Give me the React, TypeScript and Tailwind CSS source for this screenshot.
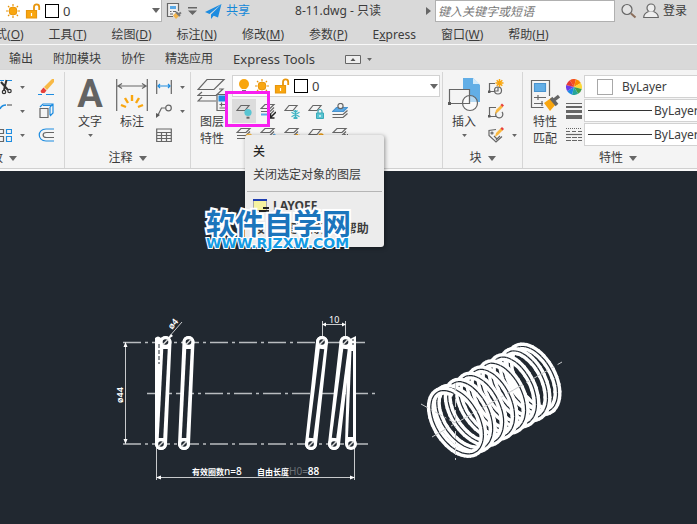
import type { ReactNode } from "react";

const MENUS: [string, string][] = [
  ["格式", "O"],
  ["工具", "T"],
  ["绘图", "D"],
  ["标注", "N"],
  ["修改", "M"],
  ["参数", "P"],
  ["Express", ""],
  ["窗口", "W"],
  ["帮助", "H"],
];

const TABS = ["输出", "附加模块", "协作", "精选应用", "Express Tools"];

/* ── Small shared glyphs ───────────────────────────────────────────────── */

function Caret({ big = false }: { big?: boolean }) {
  return (
    <svg width={big ? 8 : 5} height={big ? 5 : 3} viewBox="0 0 8 5" className="shrink-0" fill="#666">
      <path d="M0 0h8L4 5z" />
    </svg>
  );
}

function Icon({ children, size = 16, w }: { children: ReactNode; size?: number; w?: number }) {
  return (
    <svg
      width={w ?? size}
      height={size}
      viewBox={`0 0 ${w ?? size} ${size}`}
      fill="none"
      stroke="#666"
      strokeWidth="1.2"
      className="block shrink-0"
    >
      {children}
    </svg>
  );
}

function Sun() {
  return (
    <Icon>
      <circle cx="8" cy="8" r="4" fill="#f9a60f" stroke="#e8960c" strokeWidth="1" />
      <path d="M8 1v2M8 13v2M1 8h2M13 8h2M3 3l1.4 1.4M11.6 11.6L13 13M13 3l-1.4 1.4M4.4 11.6L3 13" stroke="#e8960c" />
    </Icon>
  );
}

function Unlock() {
  return (
    <Icon>
      <path d="M9 7V4a2.6 2.6 0 0 1 5.2 0v3" stroke="#e8960c" strokeWidth="1.8" />
      <path d="M1.5 7.5h10v7.5h-10z" fill="#f9a60f" stroke="#e8960c" />
      <path d="M6.5 10v3" stroke="#fff" />
    </Icon>
  );
}

function Bulb() {
  return (
    <Icon w={12}>
      <circle cx="6" cy="6" r="5" fill="#f9a60f" stroke="none" />
      <path d="M3.5 9h5v2h-5z" fill="#f9a60f" stroke="none" />
      <path d="M4 12.5h4M4.5 14.5h3" stroke="#777" />
    </Icon>
  );
}

function Swatch() {
  return <span className="h-3.5 w-3.5 shrink-0 border border-black bg-white" />;
}

/* ── Title bar, menus and tabs ─────────────────────────────────────────── */

function TitleBar() {
  return (
    <header className="flex h-[22px] items-center">
      <label className="flex h-[22px] w-[162px] shrink-0 items-center border-b border-r border-[#b4b4b4] bg-white pl-[5px] pr-px">
        <Sun />
        <span className="w-1" />
        <Unlock />
        <span className="w-1" />
        <Swatch />
        <select aria-label="图层" className="ml-1 min-w-0 flex-1 appearance-none bg-transparent text-[13px] outline-none">
          <option>0</option>
        </select>
        <Caret big />
      </label>
      <button aria-label="图纸集" className="ml-1">
        <Icon>
          <path d="M12.5 8V.5h-11v13H7" fill="#eee" />
          <path d="M4 3h6v3H4z" fill="#5aa9e6" stroke="none" />
          <path d="M4 8.500h1.500M7 8.500h3M4 11h3" />
          <path d="M7 12.500l3-3 3 3.500-3 3z" fill="#f2b44c" stroke="none" />
          <path d="M10 9l4 4M12.500 11.500L15 9.500" strokeWidth="2" stroke="#777" />
        </Icon>
      </button>
      <button aria-label="自定义快速访问工具栏" className="ml-1.5">
        <svg width="9" height="8" fill="#666">
          <path d="M0 0h9v1.500H0zM0 3.500h9L4.500 8z" />
        </svg>
      </button>
      <button className="ml-2 flex items-center gap-1 text-[#1488d8]">
        <svg width="17" height="15" viewBox="0 0 17 15" fill="#1d8ce0">
          <path d="M16.500 0L0 8l4.500 2zM16.500 0L6 10.500V15l2.700-3.200L13 13.500z" />
        </svg>
        共享
      </button>
      <h1 className="flex-1 whitespace-nowrap text-center">8-11.dwg - 只读</h1>
      <svg width="5" height="8" fill="#666" className="shrink-0">
        <path d="M0 0v8l5-4z" />
      </svg>
      <input
        aria-label="搜索"
        placeholder="键入关键字或短语"
        className="ml-1 h-[22px] w-[180px] shrink-0 border border-[#b0b0b0] bg-white px-0.5 italic outline-none placeholder:text-[#777]"
      />
      <button aria-label="查找" className="ml-1.5">
        <Icon>
          <circle cx="6" cy="6.500" r="5" fill="#e4e4e4" />
          <path d="M10 10.500l4.500 4" stroke="#8b6f5c" strokeWidth="2" />
        </Icon>
      </button>
      <button className="ml-1.5 mr-2.5 flex items-center gap-1 whitespace-nowrap">
        <Icon>
          <circle cx="8" cy="5" r="4" fill="#eee" />
          <path d="M5.500 8.500C3 9.500.7 10.500.7 14.500h14.600c0-4-2.300-5-4.800-6" fill="#eee" />
        </Icon>
        登录
      </button>
    </header>
  );
}

function MenuBar() {
  return (
    <nav className="-ml-[17px] flex h-[23px] items-center gap-[25px] whitespace-nowrap border-b border-[#f8f8f8] pt-1">
      {MENUS.map(([name, key]) => (
        <button key={name}>
          {key ? (
            <>
              {name}(<u>{key}</u>)
            </>
          ) : (
            <>
              E<u>x</u>press
            </>
          )}
        </button>
      ))}
    </nav>
  );
}

function TabBar() {
  return (
    <nav className="flex h-6 items-center gap-5 whitespace-nowrap pl-[9px] pt-1">
      {TABS.map((t) => (
        <button key={t} className={t === "Express Tools" ? "text-[13px]" : ""}>
          {t}
        </button>
      ))}
      <button aria-label="最小化面板" className="ml-2.5 flex items-center gap-1.5">
        <svg width="16" height="9" fill="none" stroke="#666">
          <path d="M.5.5h15v8H.5z" fill="#eee" />
          <path d="M5.500 6h5L8 3z" fill="#555" stroke="none" />
        </svg>
        <Caret />
      </button>
    </nav>
  );
}

/* ── Ribbon ────────────────────────────────────────────────────────────── */

function Panel({ title, className, titleClass = "justify-center", children }: {
  title: string;
  className: string;
  titleClass?: string;
  children: ReactNode;
}) {
  return (
    <section className={`relative flex flex-col border-r border-[#d6d6d6] pt-[3px] ${className}`}>
      <div className="flex h-[73px] items-start">{children}</div>
      <button className={`flex h-5 items-center gap-1.5 whitespace-nowrap ${titleClass}`}>
        {title}
        <Caret big />
      </button>
    </section>
  );
}

function Tool({ label, icon, caret = false, className = "" }: {
  label: string;
  icon: ReactNode;
  caret?: boolean;
  className?: string;
}) {
  return (
    <button className={`flex shrink-0 flex-col items-center pt-[3px] leading-[17px] ${className}`}>
      <span className="mb-px flex h-[34px] items-end">{icon}</span>
      {label.split(" ").map((l) => (
        <span key={l}>{l}</span>
      ))}
      {caret && (
        <span className="mt-1">
          <Caret />
        </span>
      )}
    </button>
  );
}

function ModifyPanel() {
  const rows = [
    {
      name: "修剪",
      alt: "删除",
      a: (
        <>
          <path d="M0 1.500h4M6 1.500h6" stroke="#1d8ce0" />
          <path d="M1 3l7 8M6.500 1L4 11" stroke="#333" strokeWidth="2" />
          <circle cx="4" cy="13" r="1.700" stroke="#333" />
          <circle cx="9.500" cy="12" r="1.700" stroke="#333" />
        </>
      ),
      b: (
        <>
          <path d="M6 8l8-8h2v3l-7 8z" fill="#f8b945" stroke="none" />
          <path d="M5.500 8.500l3 3-2 2.500h-3l-1-2z" fill="#e8403a" stroke="none" />
          <path d="M0 15.500h4M8 15.500h8" stroke="#1d8ce0" />
        </>
      ),
    },
    {
      name: "圆角",
      alt: "分解",
      a: (
        <>
          <path d="M0 6c1-2.500 3-4 6-4" stroke="#1d8ce0" strokeWidth="1.500" />
          <path d="M7 2h5" />
        </>
      ),
      b: (
        <>
          <path d="M2 5.500h8v9H2z" />
          <path d="M2 4l3-3h10v9l-3 3M5 2.500h8M12 4l3-3M12 4v8" stroke="#1d8ce0" />
        </>
      ),
    },
    {
      name: "阵列",
      alt: "偏移",
      a: (
        <>
          <path d="M-1 2.500h4.500v4H-1zM-1 9.500h4.500v5H-1z" stroke="#666" />
          <path d="M6.500 2.500h5v4h-5zM6.500 9.500h5v5h-5z" stroke="#1d8ce0" />
        </>
      ),
      b: (
        <>
          <path d="M16 2H8c-9 0-9 12 0 12h8" stroke="#1d8ce0" />
          <path d="M16 5.500H8.500c-4.500 0-4.500 5 0 5H16" />
        </>
      ),
    },
  ];
  return (
    <Panel title="修改" className="w-[65px] shrink-0" titleClass="-ml-[21px] justify-start">
      <div className="flex flex-col">
        {rows.map((r) => (
          <div key={r.name} className="flex h-6 items-center">
            <button aria-label={r.name} className="flex items-center gap-2">
              <Icon w={12}>{r.a}</Icon>
              <Caret />
            </button>
            <button aria-label={r.alt} className="ml-[13px]">
              <Icon>{r.b}</Icon>
            </button>
          </div>
        ))}
      </div>
    </Panel>
  );
}

function AnnotatePanel() {
  return (
    <Panel title="注释" className="w-[126px] shrink-0">
      <Tool
        label="文字"
        caret
        className="ml-2.5 w-[30px]"
        icon={<span className="font-['Roboto'] text-[38px] font-bold leading-[36px] text-[#636363]">A</span>}
      />
      <Tool
        label="标注"
        className="ml-[11px] w-8"
        icon={
          <Icon size={34} w={32}>
            <path d="M.7 1v32M31.300 1v32M2 8h28M6 5.500L2 8l4 2.500M26 5.500L30 8l-4 2.500" />
            <path d="M16 17v6M9 20l3 5M23 20l-3 5M5 27l5 2M27 27l-5 2" stroke="#f9a60f" strokeWidth="2.400" />
          </Icon>
        }
      />
      <div className="ml-2 flex flex-col">
        <button aria-label="线性" className="flex h-6 items-center gap-2">
          <Icon>
            <path d="M.7 1v14M15.300 1v14" />
            <path d="M2 7h12M4 5L2 7l2 2M12 5l2 2-2 2" stroke="#1d8ce0" />
          </Icon>
          <Caret />
        </button>
        <button aria-label="引线" className="flex h-6 items-center gap-2">
          <Icon>
            <circle cx="12.500" cy="5" r="2.800" />
            <path d="M9.500 5H5.500L1.500 13" />
            <path d="M0 15v-5l4 2z" fill="#5a5a5a" stroke="none" />
          </Icon>
          <Caret />
        </button>
        <button aria-label="表格" className="flex h-6 items-center">
          <Icon>
            <path d="M.7 2h14.600v12.500H.7zM.7 5.500h14.600M.7 8.500h14.600M.7 11.500h14.600M5.500 5.500v9M10.500 5.500v9" />
          </Icon>
        </button>
      </div>
    </Panel>
  );
}

/* Layer command icons: one sheet or a stack of them, plus a badge */
function Sheet({ stack = false, badge }: { stack?: boolean; badge: ReactNode }) {
  return (
    <Icon>
      {stack ? (
        <path d="M5 1.500h9L10 5.500H1zM1 8.500h9l4-4M1 11.500h9l4-4" />
      ) : (
        <path d="M5 2.500h8L9 7.500H1z" />
      )}
      {badge}
    </Icon>
  );
}

const LAYER_TOOLS = [
  {
    name: "关",
    icon: (
      <Sheet
        badge={
          <>
            <circle cx="12" cy="9.500" r="3.600" fill="#59c5d2" stroke="none" />
            <path d="M10.500 14.700h3" stroke="#666" strokeWidth="2" />
          </>
        }
      />
    ),
  },
  {
    name: "置为当前",
    icon: (
      <Sheet
        stack
        badge={
          <>
            <path d="M1 11.500h9" stroke="#5aa9e6" strokeWidth="2" />
            <path d="M16 9l-5 5M10.500 10.500V15h4" stroke="#222" strokeWidth="1.500" />
          </>
        }
      />
    ),
  },
  {
    name: "冻结",
    icon: (
      <Sheet
        badge={<path d="M11.500 7v9M7.500 9.200l8 4.600M7.500 13.800l8-4.600M9.500 7.500l2 2 2-2M9.500 15.500l2-2 2 2" stroke="#3fb4c4" />}
      />
    ),
  },
  {
    name: "锁定",
    icon: (
      <Sheet
        badge={
          <>
            <path d="M10 10V8.500a2 2 0 0 1 4 0V10" stroke="#3aa9b8" />
            <path d="M8.500 10h7v5.500h-7z" fill="#59c5d2" stroke="#3aa9b8" strokeWidth="1" />
            <path d="M12 12v2" stroke="#fff" />
          </>
        }
      />
    ),
  },
  {
    name: "匹配图层",
    icon: (
      <Icon>
        <path d="M4.500 4.500h11l-4 4H.5z" fill="#5aa9e6" stroke="#4a94cf" />
        <circle cx="8.500" cy="3" r="2.600" fill="#f4f4f4" />
        <path d="M.5 11.500h10.500l4.500-4M.5 14.500h10.500l4.500-4" />
      </Icon>
    ),
  },
  { name: "打开所有图层", icon: <Sheet stack badge={<circle cx="13" cy="10" r="3.400" fill="#f9b840" stroke="none" />} /> },
  { name: "隔离", icon: <Sheet stack badge={<path d="M11 12l4-5" stroke="#5aa9e6" strokeWidth="2" />} /> },
  { name: "解冻", icon: <Sheet stack badge={<path d="M13 7v2M10 8l1 2M16 8l-1 2" stroke="#f9a60f" strokeWidth="2" />} /> },
  { name: "解锁", icon: <Sheet badge={<circle cx="13" cy="9" r="2" stroke="#e8960c" strokeWidth="1.500" />} /> },
  { name: "更改图层", icon: <Sheet stack badge={<path d="M12 8h1M15 8h1" strokeWidth="2" />} /> },
];

function LayerTip() {
  return (
    <div
      role="tooltip"
      className="absolute left-[54px] top-[63px] z-10 h-[112px] w-[139px] rounded-[3px] bg-[#ececec] px-2 pt-2 shadow-[1px_1px_4px_rgba(0,0,0,0.4)]"
    >
      <p className="h-[19px] font-medium leading-[18px] text-[#222]">关</p>
      <p className="mt-1 whitespace-nowrap leading-[18px]">关闭选定对象的图层</p>
      <hr className="-mx-1.5 mt-[7px] border-[#b5b5b5]" />
      <p className="mt-1 flex h-5 items-center gap-1 font-bold">
        <svg width="16" height="15" viewBox="0 0 16 15">
          <path d="M.5.5h13v11H.5z" fill="#f6f3a0" stroke="#aaa" />
          <path d="M0 0h14v2H0z" fill="#1d3cb0" />
          <path d="M6 12h10M10 9h6" stroke="#222" strokeWidth="2" />
        </svg>
        LAYOFF
      </p>
      <p className="mt-1 whitespace-nowrap font-bold leading-[18px]">按 F1 键获得更多帮助</p>
    </div>
  );
}

function LayerPanel() {
  return (
    <Panel title="图层" className="w-[252px] shrink-0">
      <Tool
        label="图层 特性"
        className="ml-1.5 w-[30px]"
        icon={
          <Icon size={34} w={30}>
            <path d="M10 1.500h17L17 11.500H1zM22 11h4l-7 6.500H1l4-3.500M19 23H1l4-4" />
            <path d="M20 16.500h13v16H20z" fill="#f4f4f4" />
            <path d="M21.500 17.500h12v6h-12z" fill="#1d8ce0" stroke="none" />
            <path d="M22.500 26.500h8M24.500 24.500v4M22.500 30h8" />
          </Icon>
        }
      />
      <div className="ml-[5px] min-w-0 flex-1 pr-0.5">
        <label className="flex h-[22px] items-center border border-[#d2d2d2] bg-white px-1 pr-px">
          <span className="w-px" />
          <Bulb />
          <span className="w-1" />
          <Sun />
          <span className="w-1" />
          <Unlock />
          <span className="w-1" />
          <Swatch />
          <select aria-label="当前图层" className="ml-1 min-w-0 flex-1 appearance-none bg-transparent text-[13px] outline-none">
            <option>0</option>
          </select>
          <Caret big />
        </label>
        <div className="grid w-[120px] grid-cols-5 pt-0.5">
          {LAYER_TOOLS.map((t, i) => (
            <button
              key={t.name}
              aria-label={t.name}
              className={`flex h-6 items-center justify-center ${i === 0 ? "bg-[#dcdcdc]" : ""}`}
            >
              {t.icon}
            </button>
          ))}
        </div>
      </div>
      <div className="pointer-events-none absolute left-[34px] top-[19px] h-[36px] w-[45px] border-3 border-[#f81ff0]" />
      <LayerTip />
    </Panel>
  );
}

function BlockPanel() {
  return (
    <Panel title="块" className="w-20 shrink-0">
      <Tool
        label="插入"
        caret
        className="ml-1 w-[34px]"
        icon={
          <Icon size={34} w={34}>
            <path d="M16 0h10l7 7v17H16z" fill="#62aee6" stroke="none" />
            <path d="M26 0v6h7z" fill="#d5ebfa" stroke="none" />
            <path d="M2.500 11.500h20v14h-20z" fill="#f4f4f4" />
            <circle cx="23" cy="25" r="7.500" fill="#ffffff88" />
            <path d="M22.500 17v8.500H16" />
            <path d="M1 24h3v3H1z" fill="#5a5a5a" stroke="none" />
          </Icon>
        }
      />
      <div className="ml-[7px] flex flex-col">
        <button aria-label="创建块" className="flex h-6 items-center">
          <Icon>
            <path d="M7 4.500H1.500v8H7" />
            <circle cx="10" cy="11.500" r="3.500" />
            <path d="M10 8v4H6.500" />
            <path d="M11.500 0v8M7.500 4h8M8.700 1.200l5.600 5.600M14.300 1.200L8.700 6.800" stroke="#f9a60f" strokeWidth="1.500" />
            <path d="M0 11.500h2.500V14H0z" fill="#5a5a5a" stroke="none" />
          </Icon>
        </button>
        <button aria-label="编辑块" className="flex h-6 items-center">
          <Icon>
            <path d="M8 4.500H1.500v9H8" />
            <path d="M14 9a3.600 3.600 0 1 1-5-.5" />
            <path d="M7 11l1-4 5-5 2 2-5 5z" fill="#f9b840" stroke="none" />
            <path d="M12.500 2L14 .5 16 2.500 14.500 4z" fill="#e8403a" stroke="none" />
            <path d="M0 12h2.500v2.500H0z" fill="#5a5a5a" stroke="none" />
          </Icon>
        </button>
        <button aria-label="编辑属性" className="flex h-6 items-center gap-2">
          <Icon>
            <path d="M8 2.500L1 3.500v5l7 6.500 6-5.500" />
            <circle cx="4" cy="6" r="1" />
            <path d="M6 9l3 3M8 13l4-4" />
            <path d="M7 10l1-4 5-5 2 2-5 5z" fill="#f9b840" stroke="none" />
            <path d="M12.500 1.500L14 0l2 2-1.500 1.500z" fill="#e8403a" stroke="none" />
          </Icon>
          <Caret />
        </button>
      </div>
    </Panel>
  );
}

function PropSelect({ name, line }: { name: string; line: boolean }) {
  return (
    <label className="flex h-[23px] items-center border border-r-0 border-[#d2d2d2] bg-white pl-[3px]">
      {line ? (
        <span className="h-px w-16 shrink-0 bg-[#333]" />
      ) : (
        <span className="ml-[9px] mr-[7px] h-4 w-4 shrink-0 border border-[#a8a8a8] bg-white" />
      )}
      <select aria-label={name} className="ml-0.5 w-14 shrink-0 appearance-none bg-transparent outline-none">
        <option>ByLayer</option>
      </select>
    </label>
  );
}

const WHEEL = ["#f4511e", "#fb8c00", "#fdd835", "#43a047", "#26a69a", "#1e88e5", "#6a3de8", "#e53935"];

// point on the colour wheel's rim, k eighths of a turn clockwise
const rim = (k: number) => {
  const a = (k * Math.PI) / 4 + 2.6;
  return `${(8 + 8 * Math.sin(a)).toFixed(2)} ${(8 - 8 * Math.cos(a)).toFixed(2)}`;
};

function PropertiesPanel() {
  return (
    <Panel title="特性" className="min-w-0 flex-1 border-r-0" titleClass="justify-center pl-4">
      <Tool
        label="特性 匹配"
        className="ml-[7px] w-[30px]"
        icon={
          <Icon size={34} w={30}>
            <path d="M19.500 18V2.500h-18v27h12" />
            <path d="M4.500 5.500h11v8h-11z" fill="#62aee6" stroke="#4a94cf" />
            <path d="M4 19.500h12M8 17v5M4 25.500h9M12 23v5" />
            <path d="M14 25l7-5 5 6-6 7z" fill="#f9a60f" stroke="none" />
            <path d="M21 20l6 7M24 22l5-4" strokeWidth="3.500" />
          </Icon>
        }
      />
      <div className="ml-1.5 flex shrink-0 flex-col">
        <button aria-label="对象颜色" className="flex h-6 items-center">
          <Icon>
            {WHEEL.map((c, i) => (
              <path key={c} stroke="none" fill={c} d={`M8 8L${rim(i + 4)}A8 8 0 0 1 ${rim(i + 5)}z`} />
            ))}
          </Icon>
        </button>
        <button aria-label="线宽" className="flex h-6 items-center">
          <Icon>
            <path d="M0 .5h16" strokeWidth="1" />
            <path d="M0 4h16" strokeWidth="2" />
            <path d="M0 8.500h16" strokeWidth="3" />
            <path d="M0 14h16" strokeWidth="4" />
          </Icon>
        </button>
        <button aria-label="线型" className="flex h-6 items-center">
          <Icon>
            <path d="M0 1.500h16" strokeDasharray="1 1" />
            <path d="M0 4.500h16" strokeDasharray="4 2" />
            <path d="M0 7.500h16" />
            <path d="M0 10.500h16M0 13.500h16" strokeDasharray="5 1" />
          </Icon>
        </button>
      </div>
      <div className="ml-0.5 flex min-w-0 flex-1 flex-col gap-px overflow-hidden">
        <PropSelect name="对象颜色" line={false} />
        <PropSelect name="线宽" line />
        <PropSelect name="线型" line />
      </div>
    </Panel>
  );
}

/* ── Drawing area ──────────────────────────────────────────────────────── */

const BG = "#212830";
const DASH = "18 4 3 4";

// one wire turn in the side view: a capsule from the top section to the bottom one
function Turn({ x1, x2 }: { x1: number; x2: number }) {
  return (
    <>
      <line x1={x1} y1="342" x2={x2} y2="444" stroke="#fff" strokeWidth="12" strokeLinecap="round" />
      <line x1={x1} y1="349" x2={x2} y2="438" stroke={BG} strokeWidth="4.500" />
      {[[x1, 342], [x2, 444]].map(([cx, cy]) => (
        <g key={cy}>
          <circle cx={cx} cy={cy} r="6" fill="#fff" />
          <circle cx={cx} cy={cy} r="2.800" fill={BG} />
          <path d={`M${cx - 2.5} ${cy + 2.5}l5-5`} stroke="#ddd" strokeWidth="1.500" />
        </g>
      ))}
    </>
  );
}

// isometric helix, chunked and sorted far to near; the end turns are wound tighter
function helix() {
  const turns = 8.6;
  const per = 28;
  const R = 35.5;
  const at = (t: number) => {
    const ease = t < 1 ? t * 0.4 : t > turns - 1 ? turns - 1.6 + (t - turns + 1) * 0.4 : t - 0.6;
    const s = (ease / (turns - 1.2)) * 93;
    const a = t * 2 * Math.PI + 2.44;
    const u = R * Math.cos(a);
    const v = R * Math.sin(a);
    const along = s + v * 0.577;
    return {
      x: 455 + along * 0.872 + u * 0.5,
      y: 423 - along * 0.49 + u * 0.866,
      depth: s * 0.577 - v * 0.816,
    };
  };
  const out: { d: string; depth: number }[] = [];
  for (let i = 0; i < turns * per; i++) {
    const pts = [-0.15, 0.5, 1.15].map((k) => at((i + k) / per));
    out.push({ d: "M" + pts.map((p) => `${p.x.toFixed(1)} ${p.y.toFixed(1)}`).join("L"), depth: pts[1].depth });
  }
  return out.sort((a, b) => b.depth - a.depth);
}

const COIL = helix();

function Drawing() {
  return (
    <svg viewBox="0 171 697 353" className="block w-full" fill="none">
      <g stroke="#b9bcbf" strokeWidth="1.500" strokeDasharray={DASH}>
        <path d="M123 342.500h242M147 393.500h229M123 444h245" />
      </g>
      <g stroke="#c8cacc">
        <path d="M125.500 342v102M156.500 444v36M354.500 444v36M156 477.500h199M322.500 321v18M345.500 321v18M322 324.500h24M168 338l14-16" />
      </g>
      <g fill="#fff">
        <path d="M125.500 342l-2 5h4zM125.500 444l-2-5h4zM156 477.500l5-2v4zM355 477.500l-5-2v4zM322 324.500l4-2v4zM346 324.500l-4-2v4zM167 340l4-6 2 2z" />
      </g>
      <path d="M155 338q3-3 6 0l4 4-4 102h-6z" fill="#fff" />
      <Turn x1={165.5} x2={161} />
      <path d="M159 344v20" stroke={BG} strokeDasharray="4 2" />
      <Turn x1={188.5} x2={184} />
      <Turn x1={322} x2={311} />
      <path d="M356 336l-8 4-3 104h11z" fill="#fff" />
      <path d="M351.500 351h1.500v86h-5z" fill={BG} />
      <Turn x1={345.5} x2={334} />
      <circle cx="351" cy="444" r="6" fill="#fff" />
      <circle cx="351" cy="444" r="2.800" fill={BG} />
      <path d="M348.500 446.500l5-5" stroke="#ddd" strokeWidth="1.500" />
      <path d="M353 339v7" stroke={BG} strokeDasharray="2 2" />

      <g fill="#fff" className="font-['Noto_Sans','Noto_Sans_CJK_SC',sans-serif]" fontSize="9">
        <text x="329" y="323">10</text>
        <text transform="translate(123 403) rotate(-90)" fontWeight="600">ø44</text>
        <text transform="translate(172 330) rotate(-50)" fontWeight="600">ø4</text>
        <text x="192" y="475" fontSize="8" fontWeight="700">
          有效圈数<tspan fontSize="10" fontWeight="500">n=8</tspan>
        </text>
        <text x="257" y="475" fontSize="8" fontWeight="700">
          自由长度<tspan fontSize="10" fill="#6b7076" fontWeight="400">H0=</tspan>
          <tspan fontSize="10" fontWeight="600">88</tspan>
        </text>
      </g>

      {COIL.map((c, i) => (
        <g key={i}>
          <path d={c.d} stroke="#fff" strokeWidth="8" />
          <path d={c.d} stroke={BG} strokeWidth="1.200" />
        </g>
      ))}
      <path d="M432 437L562 362" stroke="#c8cacc" strokeDasharray={DASH} />
      <path d="M421 404l34 19M455.500 383v77" stroke="#c8cacc" strokeDasharray="8 3 2 3" />
    </svg>
  );
}

function Watermark() {
  return (
    <div className="absolute left-[206px] top-[31px] z-20 whitespace-nowrap font-bold [paint-order:stroke_fill]">
      <div className="font-['Noto_Sans_CJK_SC',sans-serif] text-[29px] leading-[40px] text-[#1b75bc] [-webkit-text-stroke:4px_#fff]">
        软件自学网
      </div>
      <div className="-mt-1.5 font-['DejaVu_Sans',sans-serif] text-[14px] leading-[14px] text-[#139be4] [-webkit-text-stroke:2px_#fff]">
        WWW.RJZXW.COM
      </div>
    </div>
  );
}

export default function App() {
  return (
    <div className="min-h-screen overflow-hidden bg-[#212830] font-['Noto_Sans','Noto_Sans_CJK_SC',sans-serif] text-[12px] leading-[18px] text-[#3c3c3c]">
      <div className="bg-[#d9d9d9]">
        <TitleBar />
        <MenuBar />
        <TabBar />
      </div>
      <div className="border-b-2 border-t border-b-[#fafafa] border-t-[#d6d6d6] bg-[#f4f4f4]">
        <div className="flex border-b border-[#d0d0d0] pt-0.5">
          <ModifyPanel />
          <AnnotatePanel />
          <LayerPanel />
          <BlockPanel />
          <PropertiesPanel />
        </div>
      </div>
      <main className="relative">
        <Drawing />
        <Watermark />
      </main>
    </div>
  );
}
